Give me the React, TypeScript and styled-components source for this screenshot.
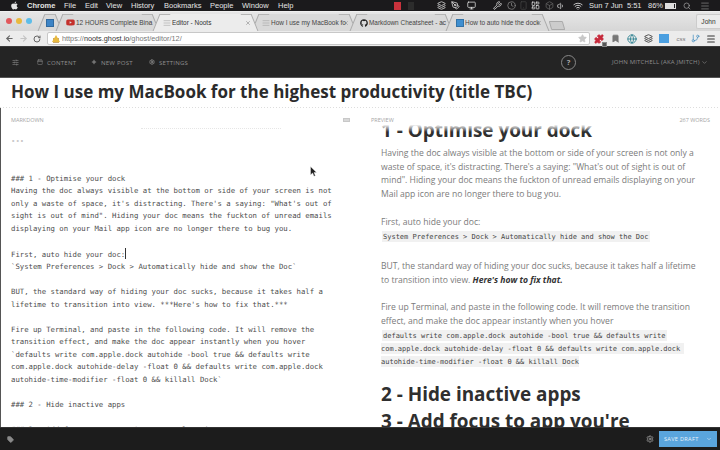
import React from "react";
import styled, { createGlobalStyle } from "styled-components";
import { FaApple, FaGithub, FaYoutube } from "react-icons/fa";
import {
  ArrowLeft, ArrowRight, RotateCw, X, Star, Search, Wifi, Volume1, Menu, ChevronDown,
  Settings, Tag, Plus, Layers, PenTool, Monitor, Wrench, Clock, AlignJustify,
  SlidersHorizontal, Calendar, Box, Smartphone, LayoutDashboard, Globe, Puzzle, GitBranch, Bookmark,
} from "lucide-react";

const Global = createGlobalStyle`
  html, body { margin: 0; padding: 0; background: #fff; }
  * { box-sizing: border-box; }
`;

const Page = styled.div`
  width: 720px; height: 450px; overflow: hidden; position: relative;
  display: flex; flex-direction: column;
  font-family: "Open Sans", "Liberation Sans", sans-serif;
`;

const MenuBar = styled.div`
  height: 11px; flex: none; background: #1b1a1c; color: #e4e4e4;
  display: flex; align-items: center;
  font: 7.5px/11px "Liberation Sans", Arial, sans-serif;
`;
const MenuSlot = styled.span<{ $w: number; $bold?: boolean; $color?: string }>`
  flex: none; width: ${(p) => p.$w}px; display: flex; align-items: center; white-space: nowrap;
  font-weight: ${(p) => (p.$bold ? 700 : 400)};
  color: ${(p) => p.$color ?? "inherit"};
`;
const StatusSlot = styled(MenuSlot)`justify-content: center;`;
const Swatch = styled.i<{ $c: string; $w?: number; $h?: number }>`
  display: block; width: ${(p) => p.$w ?? 7}px; height: ${(p) => p.$h ?? 8}px; background: ${(p) => p.$c};
`;
const Battery = styled.i`
  display: block; width: 11px; height: 6px; border: 1px solid #ddd;
  background: linear-gradient(90deg, #ddd 85%, transparent 85%);
`;

const TabStrip = styled.div`
  height: 20px; flex: none; display: flex; align-items: flex-end;
  background: linear-gradient(#e6e6e6, #d6d6d6);
  border-top: 1px solid #efefef; position: relative;
`;
const Lights = styled.div`
  flex: none; width: 41px; height: 19px; display: flex; gap: 4px; padding: 6px 0 0 6px;
`;
const Light = styled.i<{ $c: string }>`
  display: block; width: 6px; height: 6px; border-radius: 50%; background: ${(p) => p.$c};
`;
const Tab = styled.div<{ $w: number; $active?: boolean }>`
  flex: none; width: ${(p) => p.$w}px; height: 17px; position: relative;
  display: flex; align-items: center; padding: 0 4px 0 5px;
  font: 6.45px/17px "Liberation Sans", Arial, sans-serif; color: ${(p) => (p.$active ? "#333" : "#444")};
  z-index: ${(p) => (p.$active ? 2 : 1)};
  &::before, &::after {
    content: ""; position: absolute; top: 0; bottom: 0; width: 10px;
    background: ${(p) => (p.$active ? "#ececec" : "#d9d9d9")};
    border-top: 1px solid #b5b5b5; z-index: -1;
  }
  &::before { left: 0; transform: skewX(-22deg); border-left: 1px solid #aaa; }
  &::after { right: 0; transform: skewX(22deg); border-right: 1px solid #aaa; }
  background: ${(p) => (p.$active ? "#ececec" : "#d9d9d9")};
  background-clip: content-box;
`;
const TabInner = styled.div`
  flex: 1; min-width: 0; display: flex; align-items: center; gap: 1px; height: 100%; padding-left: 2px;
`;
const TabTitle = styled.span`
  flex: 1; min-width: 0; white-space: nowrap;
`;
const Favicon = styled.i<{ $c: string }>`
  flex: none; width: 8px; height: 8px; background: ${(p) => p.$c}; display: block;
  border: 1px solid rgba(0,0,0,.2);
`;
const PageIcon = styled.span`
  flex: none; display: flex; color: #999;
`;
const NewTab = styled.div`
  flex: none; width: 14px; height: 9px; margin: 0 0 1px 4px; background: #ccc;
  border: 1px solid #aaa; transform: skewX(16deg); border-radius: 1px;
`;
const ProfileButton = styled.div`
  position: absolute; right: 0; top: 2px; width: 24px; height: 15px;
  background: #ececec; border: 1px solid #ccc; border-right: 0; border-radius: 2px 0 0 2px;
  font: 6.6px/14px "Liberation Sans", Arial, sans-serif; color: #333; text-align: center;
`;

const Toolbar = styled.div`
  height: 16px; flex: none; background: #ececec; border-bottom: 1px solid #3a3a3a;
  display: flex; align-items: center; padding-left: 2px;
`;
const NavBtn = styled.span<{ $dim?: boolean }>`
  flex: none; width: 14px; display: flex; justify-content: center;
  color: ${(p) => (p.$dim ? "#c4c4c4" : "#666")};
`;
const UrlBox = styled.div`
  flex: none; width: 543px; height: 13px; margin-left: 3px; background: #fff;
  border: 1px solid #c8c8c8; border-radius: 2px;
  display: flex; align-items: center; padding: 0 2px 0 4px;
  font: 7.3px/12px "Liberation Sans", Arial, sans-serif; color: #777; white-space: nowrap;
`;
const Warn = styled.span`
  flex: none; width: 8px; height: 8px; margin-right: 2px; display: flex;
`;
const Host = styled.b`color: #333; font-weight: 400;`;
const UrlEnd = styled.span`margin-left: auto; display: flex; color: #c8c8c8;`;
const Ext = styled.span<{ $w: number; $c?: string }>`
  flex: none; width: ${(p) => p.$w}px; display: flex; justify-content: center; align-items: center;
  position: relative; color: ${(p) => p.$c ?? "#555"};
  font: italic 6px/10px "Liberation Sans", Arial, sans-serif;
`;
const Sub = styled.i`
  position: absolute; right: 1px; bottom: -3px; width: 5px; height: 5px; background: #555; border: 1px solid #888;
`;

const GhostNav = styled.div`
  height: 31px; flex: none; background: #242424; border-bottom: 1px solid #555;
  display: flex; align-items: center; color: #8d8d8d; padding-left: 12px;
  font-size: 6.1px; letter-spacing: .2px; white-space: nowrap;
`;
const NavItem = styled.span<{ $w: number }>`
  flex: none; width: ${(p) => p.$w}px; display: flex; align-items: center; gap: 4px;
`;
const HelpCircle = styled.span`
  flex: none; width: 15px; height: 15px; border-radius: 50%; border: 1px solid #888;
  margin-left: 372px; margin-right: 36px;
  display: flex; align-items: center; justify-content: center; color: #aaa;
  font-size: 7.5px; font-weight: 700; letter-spacing: 0;
`;
const UserMenu = styled.span`display: flex; align-items: center; gap: 1px; font-size: 6.05px; letter-spacing: .15px;`;

const TitleRow = styled.div`
  height: 30px; flex: none; padding-left: 11px;
  background-image: linear-gradient(90deg, #ddd 50%, transparent 50%);
  background-size: 3px 1px; background-repeat: repeat-x; background-position: 0 100%;
`;
const Title = styled.h1`
  margin: 0; font: 700 17px/28px "Open Sans", sans-serif; color: #2b2b2b; white-space: nowrap;
`;

const Panes = styled.div`flex: 1; min-height: 0; display: grid; grid-template-columns: 360px 360px;`;
const Pane = styled.section<{ $edge?: boolean }>`
  min-height: 0; display: flex; flex-direction: column; position: relative;
  border-left: ${(p) => (p.$edge ? "1px solid #555" : "0")};
`;
const PaneHead = styled.div<{ $pad: number }>`
  height: 17px; flex: none; padding: 7px 10px 0 ${(p) => p.$pad}px; display: flex; align-items: center;
  justify-content: space-between; color: #a6a6a6; font-size: 5.5px;
  position: relative; z-index: 2;
`;
const KeyIcon = styled.i`
  display: block; width: 7px; height: 4px; background: #d8d8d8; border: 1px solid #c8c8c8;
`;
const DottedRule = styled.i`
  position: absolute; left: 140px; top: 20px; width: 140px; border-top: 1px dotted #e6e6e6;
`;
const EditorText = styled.pre`
  flex: 1; min-height: 0; overflow: hidden; margin: 0; padding: 10px 0 0 10px;
  font: 7.3px/12.5px "DejaVu Sans Mono", monospace; color: #4d4d4d;
`;
const Caret = styled.i`
  display: inline-block; width: 1px; height: 11px; background: #333; vertical-align: -2px;
`;
const PreviewBody = styled.div`
  flex: 1; min-height: 0; overflow: hidden; padding-left: 21px; white-space: nowrap; color: #777;
  position: relative;
`;
const Shift = styled.div`margin-top: -8.5px;`;
const Heading = styled.h2`
  margin: 0; font: 700 18.9px/27px "Open Sans", sans-serif; color: #2f2f2f;
`;
const SecondHeading = styled(Heading)`margin-top: 13px;`;
const Para = styled.p<{ $mt: number }>`
  margin: ${(p) => p.$mt}px 0 0; font: 400 8.6px/13.65px "Open Sans", sans-serif; color: #7b7b7b;
`;
const Strong = styled.b`font-weight: 700; font-style: italic; color: #333;`;
const CodeLine = styled.div`font-size: 7px; line-height: 13.3px; height: 13.3px;`;
const Code = styled.code<{ $lead?: boolean }>`
  font: 7px/10px "DejaVu Sans Mono", monospace; color: #444; background: #f1f1f1;
  padding: 1.5px ${(p) => (p.$lead ? "1.5px" : "0")}; margin-left: ${(p) => (p.$lead ? "0.5px" : "0")};
`;
const Fade = styled.div`
  position: absolute; left: 0; right: 0; top: 0; height: 7px;
  background: linear-gradient(rgba(255,255,255,.95), rgba(255,255,255,0));
`;

const Footer = styled.div`
  height: 23px; flex: none; background: #1c1c1c; border-top: 1px solid #333;
  display: flex; align-items: center; padding: 0 3px 0 7px; color: #8a8a8a; position: relative; z-index: 3;
`;
const SaveGroup = styled.div`margin-left: auto; display: flex; align-items: center; gap: 5px;`;
const SaveBtn = styled.div`
  width: 58px; height: 16px; background: #5aa5dd; color: #e8f2fa; display: flex; align-items: center;
  justify-content: space-between; padding: 0 5px; font-size: 5.6px; letter-spacing: .3px;
`;
const Pointer = styled.svg`position: absolute; left: 310px; top: 166px; z-index: 4;`;

const editor = `---


### 1 - Optimise your dock
Having the doc always visible at the bottom or side of your screen is not
only a waste of space, it's distracting. There's a saying: "What's out of
sight is out of mind". Hiding your doc means the fuckton of unread emails
displaying on your Mail app icon are no longer there to bug you.

First, auto hide your doc:`;
const editor2 = `
\`System Preferences > Dock > Automatically hide and show the Doc\`

BUT, the standard way of hiding your doc sucks, because it takes half a
lifetime to transition into view. ***Here's how to fix that.***

Fire up Terminal, and paste in the following code. It will remove the
transition effect, and make the doc appear instantly when you hover
\`defaults write com.apple.dock autohide -bool true && defaults write
com.apple.dock autohide-delay -float 0 && defaults write com.apple.dock
autohide-time-modifier -float 0 && killall Dock\`

### 2 - Hide inactive apps

### 3 - Add focus to app you're currently using`;

const PageGlyph = () => <PageIcon><AlignJustify size={8} strokeWidth={1.5} /></PageIcon>;
const Close = () => <X size={6} strokeWidth={2} color="#777" />;

export default function App() {
  return (
    <Page>
      <Global />
      <MenuBar>
        <MenuSlot $w={27}><FaApple size={9} style={{ marginLeft: 10 }} /></MenuSlot>
        <MenuSlot $w={37} $bold>Chrome</MenuSlot>
        <MenuSlot $w={21}>File</MenuSlot>
        <MenuSlot $w={21}>Edit</MenuSlot>
        <MenuSlot $w={25}>View</MenuSlot>
        <MenuSlot $w={33}>History</MenuSlot>
        <MenuSlot $w={46}>Bookmarks</MenuSlot>
        <MenuSlot $w={32}>People</MenuSlot>
        <MenuSlot $w={36}>Window</MenuSlot>
        <MenuSlot $w={115}>Help</MenuSlot>
        <StatusSlot $w={8}><Swatch $c="#c8323c" /></StatusSlot>
        <StatusSlot $w={20}><Swatch $c="#2c2c2c" $w={6} /></StatusSlot>
        <StatusSlot $w={13} />
        <StatusSlot $w={14}><Layers size={9} /></StatusSlot>
        <StatusSlot $w={14}><PenTool size={9} /></StatusSlot>
        <StatusSlot $w={18}><Monitor size={9} /></StatusSlot>
        <StatusSlot $w={10} />
        <StatusSlot $w={14}><Wrench size={9} /></StatusSlot>
        <StatusSlot $w={14} $color="#888"><Clock size={9} /></StatusSlot>
        <StatusSlot $w={10} $color="#444"><Smartphone size={9} /></StatusSlot>
        <StatusSlot $w={14}><LayoutDashboard size={9} /></StatusSlot>
        <StatusSlot $w={14} $color="#666"><Box size={9} /></StatusSlot>
        <StatusSlot $w={10}><Volume1 size={8} /></StatusSlot>
        <StatusSlot $w={23}><Wifi size={10} /></StatusSlot>
        <MenuSlot $w={59}>Sun 7 Jun&nbsp; 5:51</MenuSlot>
        <MenuSlot $w={16}>86%</MenuSlot>
        <StatusSlot $w={12}><Battery /></StatusSlot>
        <StatusSlot $w={22} $color="#aaa"><Search size={8} /></StatusSlot>
        <StatusSlot $w={14} $color="#777"><Menu size={10} /></StatusSlot>
      </MenuBar>

      <TabStrip>
        <Lights>
          <Light $c="#e2585c" /><Light $c="#e9b93e" /><Light $c="#5cbde9" />
        </Lights>
        <Tab $w={18}><Favicon $c="#3d84c6" /></Tab>
        <Tab $w={97}>
          <TabInner><FaYoutube size={9} color="#c4302b" /><TabTitle>12 HOURS Complete Bina</TabTitle><Close /></TabInner>
        </Tab>
        <Tab $w={99} $active>
          <TabInner><PageGlyph /><TabTitle>Editor - Noots</TabTitle><Close /></TabInner>
        </Tab>
        <Tab $w={98}>
          <TabInner><PageGlyph /><TabTitle>How I use my MacBook fo</TabTitle><Close /></TabInner>
        </Tab>
        <Tab $w={96}>
          <TabInner><FaGithub size={8} color="#222" /><TabTitle>Markdown Cheatsheet - ac</TabTitle><Close /></TabInner>
        </Tab>
        <Tab $w={97}>
          <TabInner><Favicon $c="#3f8fd0" /><TabTitle>How to auto hide the dock</TabTitle><Close /></TabInner>
        </Tab>
        <NewTab />
        <ProfileButton>John</ProfileButton>
      </TabStrip>

      <Toolbar>
        <NavBtn><ArrowLeft size={9} strokeWidth={3} /></NavBtn>
        <NavBtn $dim><ArrowRight size={9} strokeWidth={3} /></NavBtn>
        <NavBtn><RotateCw size={8} strokeWidth={3} /></NavBtn>
        <UrlBox>
          <Warn>
            <svg width="8" height="8" viewBox="0 0 8 8"><rect x="1" y="3" width="6" height="5" fill="#c9a86a" /><path d="M4 0 8 7H0Z" fill="#e8b93f" /></svg>
          </Warn>
          https://<Host>noots.ghost.io</Host>/ghost/editor/12/
          <UrlEnd><Star size={9} fill="#c8c8c8" /></UrlEnd>
        </UrlBox>
        <Ext $w={18} $c="#c6283a"><Puzzle size={10} fill="#c6283a" /><Sub /></Ext>
        <Ext $w={14} $c="#777"><Bookmark size={9} fill="#777" /></Ext>
        <Ext $w={20} $c="#2a7f8f"><Globe size={10} /></Ext>
        <Ext $w={12} $c="#222"><Layers size={9} /></Ext>
        <Ext $w={20}><Swatch $c="#4b9fe0" $w={10} $h={9} /></Ext>
        <Ext $w={14} $c="#777">css</Ext>
        <Ext $w={14} $c="#4a90c0"><GitBranch size={9} /></Ext>
        <Ext $w={18} $c="#333"><Menu size={10} strokeWidth={2.5} /></Ext>
      </Toolbar>

      <GhostNav>
        <NavItem $w={25}><SlidersHorizontal size={7} /></NavItem>
        <NavItem $w={54}><Calendar size={6} />CONTENT</NavItem>
        <NavItem $w={58}><Plus size={6} strokeWidth={4} />NEW POST</NavItem>
        <NavItem $w={40}><Settings size={6} strokeWidth={3} />SETTINGS</NavItem>
        <HelpCircle>?</HelpCircle>
        <UserMenu>JOHN MITCHELL (AKA JMITCH)<ChevronDown size={7} /></UserMenu>
      </GhostNav>

      <TitleRow>
        <Title>How I use my MacBook for the highest productivity (title TBC)</Title>
      </TitleRow>

      <Panes>
        <Pane $edge>
          <PaneHead $pad={10}>MARKDOWN<KeyIcon /></PaneHead>
          <DottedRule />
          <EditorText>{editor}<Caret />{editor2}</EditorText>
        </Pane>
        <Pane>
          <PaneHead $pad={11}>PREVIEW<span>267 WORDS</span></PaneHead>
          <PreviewBody>
            <Shift>
              <Heading>1 - Optimise your dock</Heading>
              <Para $mt={3.4}>
                Having the doc always visible at the bottom or side of your screen is not only a<br />
                waste of space, it's distracting. There's a saying: "What's out of sight is out of<br />
                mind". Hiding your doc means the fuckton of unread emails displaying on your<br />
                Mail app icon are no longer there to bug you.
              </Para>
              <Para $mt={14.4}>First, auto hide your doc:</Para>
              <CodeLine><Code $lead>System Preferences &gt; Dock &gt; Automatically hide and show the Doc</Code></CodeLine>
              <Para $mt={17}>
                BUT, the standard way of hiding your doc sucks, because it takes half a lifetime<br />
                to transition into view. <Strong>Here's how to fix that.</Strong>
              </Para>
              <Para $mt={13.8}>
                Fire up Terminal, and paste in the following code. It will remove the transition<br />
                effect, and make the doc appear instantly when you hover
              </Para>
              <CodeLine><Code $lead>defaults write com.apple.dock autohide -bool true &amp;&amp; defaults write</Code></CodeLine>
              <CodeLine><Code>com.apple.dock autohide-delay -float 0 &amp;&amp; defaults write com.apple.dock&nbsp;</Code></CodeLine>
              <CodeLine><Code>autohide-time-modifier -float 0 &amp;&amp; killall Dock</Code></CodeLine>
              <SecondHeading>2 - Hide inactive apps</SecondHeading>
              <Heading>3 - Add focus to app you're</Heading>
            </Shift>
            <Fade />
          </PreviewBody>
        </Pane>
      </Panes>

      <Footer>
        <Tag size={7} fill="#8a8a8a" />
        <SaveGroup>
          <Settings size={8} strokeWidth={3} />
          <SaveBtn>SAVE DRAFT<ChevronDown size={6} /></SaveBtn>
        </SaveGroup>
      </Footer>

      <Pointer width="7" height="11" viewBox="0 0 7 11">
        <path d="M0.5 0.5 V9 L2.6 7 L4 10.3 L5.4 9.7 L4 6.6 H6.6 Z" fill="#222" stroke="#fff" strokeWidth=".4" />
      </Pointer>
    </Page>
  );
}
